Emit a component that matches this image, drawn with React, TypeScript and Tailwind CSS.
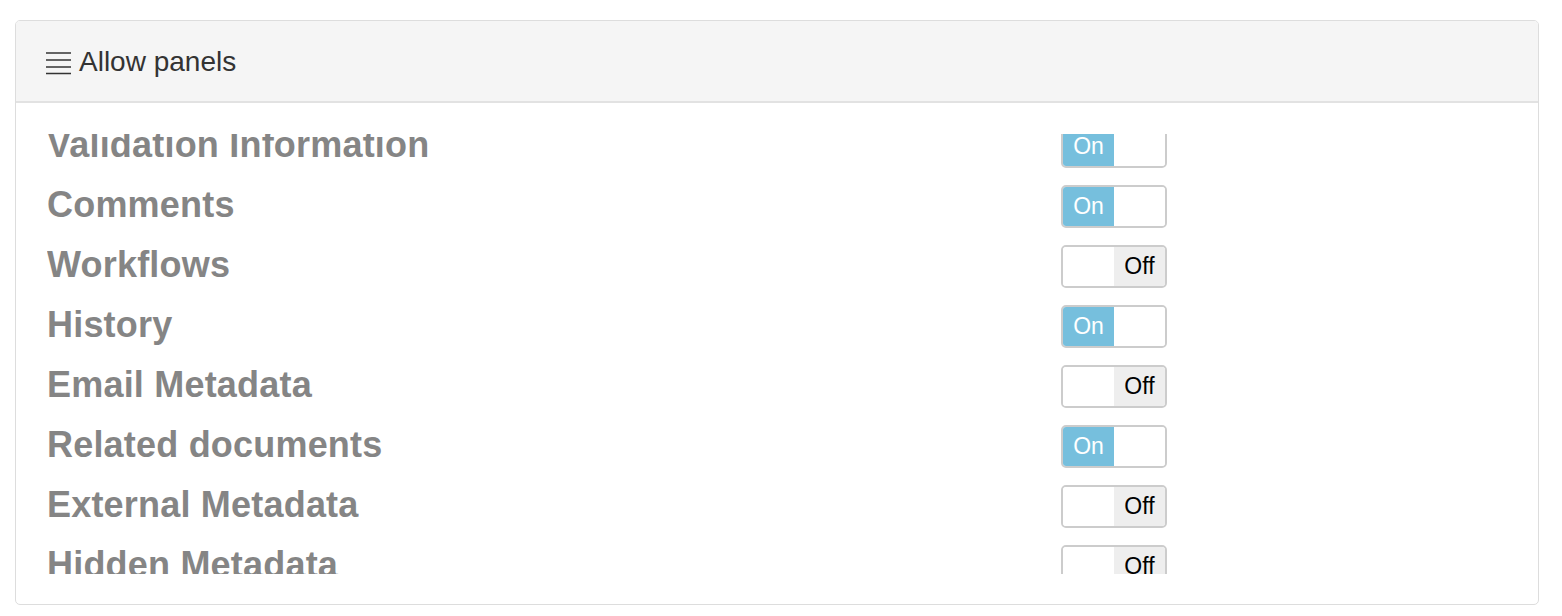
import { useLayoutEffect, useRef } from 'react'

const panels = [
  { name: 'Validation Information', on: true },
  { name: 'Comments', on: true },
  { name: 'Workflows', on: false },
  { name: 'History', on: true },
  { name: 'Email Metadata', on: false },
  { name: 'Related documents', on: true },
  { name: 'External Metadata', on: false },
  { name: 'Hidden Metadata', on: false },
  { name: 'Audit Trail', on: true },
]

function Switch({ on }: { on: boolean }) {
  return (
    <div className="flex h-[43px] w-[106px] overflow-hidden rounded-[5px] border-2 border-[#cccccc] bg-white text-[23px] leading-none">
      <span
        className={`flex w-[51px] items-center justify-center ${
          on ? 'bg-[#76bfdd] text-white' : 'bg-white'
        }`}
      >
        {on ? 'On' : ''}
      </span>
      <span
        className={`flex flex-1 items-center justify-center ${
          on ? 'bg-white' : 'bg-[#eeeeee] text-black'
        }`}
      >
        {on ? '' : 'Off'}
      </span>
    </div>
  )
}

export default function App() {
  const listRef = useRef<HTMLDivElement>(null)

  useLayoutEffect(() => {
    if (listRef.current) listRef.current.scrollTop = 18
  }, [])

  return (
    <div className="min-h-screen bg-white pl-[15px] pr-[23px] pt-[20px] font-['Liberation_Sans',Arial,sans-serif]">
      <div className="overflow-hidden rounded-[5px] border border-[#dddddd] bg-white">
        {/* Header */}
        <div className="flex h-[82px] items-center gap-[8px] border-b-2 border-[#e2e2e2] bg-[#f5f5f5] pl-[30px] pt-[2px] text-[28px] text-[#333333]">
          <svg width="25" height="24" viewBox="0 0 25 24" className="mt-[1px]">
            <g stroke="#333" strokeWidth="1.6">
              <line x1="0" y1="2" x2="25" y2="2" />
              <line x1="0" y1="9" x2="25" y2="9" />
              <line x1="0" y1="16" x2="25" y2="16" />
              <line x1="0" y1="22.5" x2="25" y2="22.5" />
            </g>
          </svg>
          <span>Allow panels</span>
        </div>

        {/* Body */}
        <div className="px-[31px] pb-[30px] pt-[31px]">
          <div ref={listRef} className="h-[440px] overflow-hidden">
            {panels.map((p) => (
              <div key={p.name} className="flex h-[60px] items-center">
                <div className="w-[1014px] pb-[3px] text-[36px] font-bold leading-none tracking-[0.2px] text-[#858585]">
                  {p.name}
                </div>
                <Switch on={p.on} />
              </div>
            ))}
          </div>
        </div>
      </div>
    </div>
  )
}
